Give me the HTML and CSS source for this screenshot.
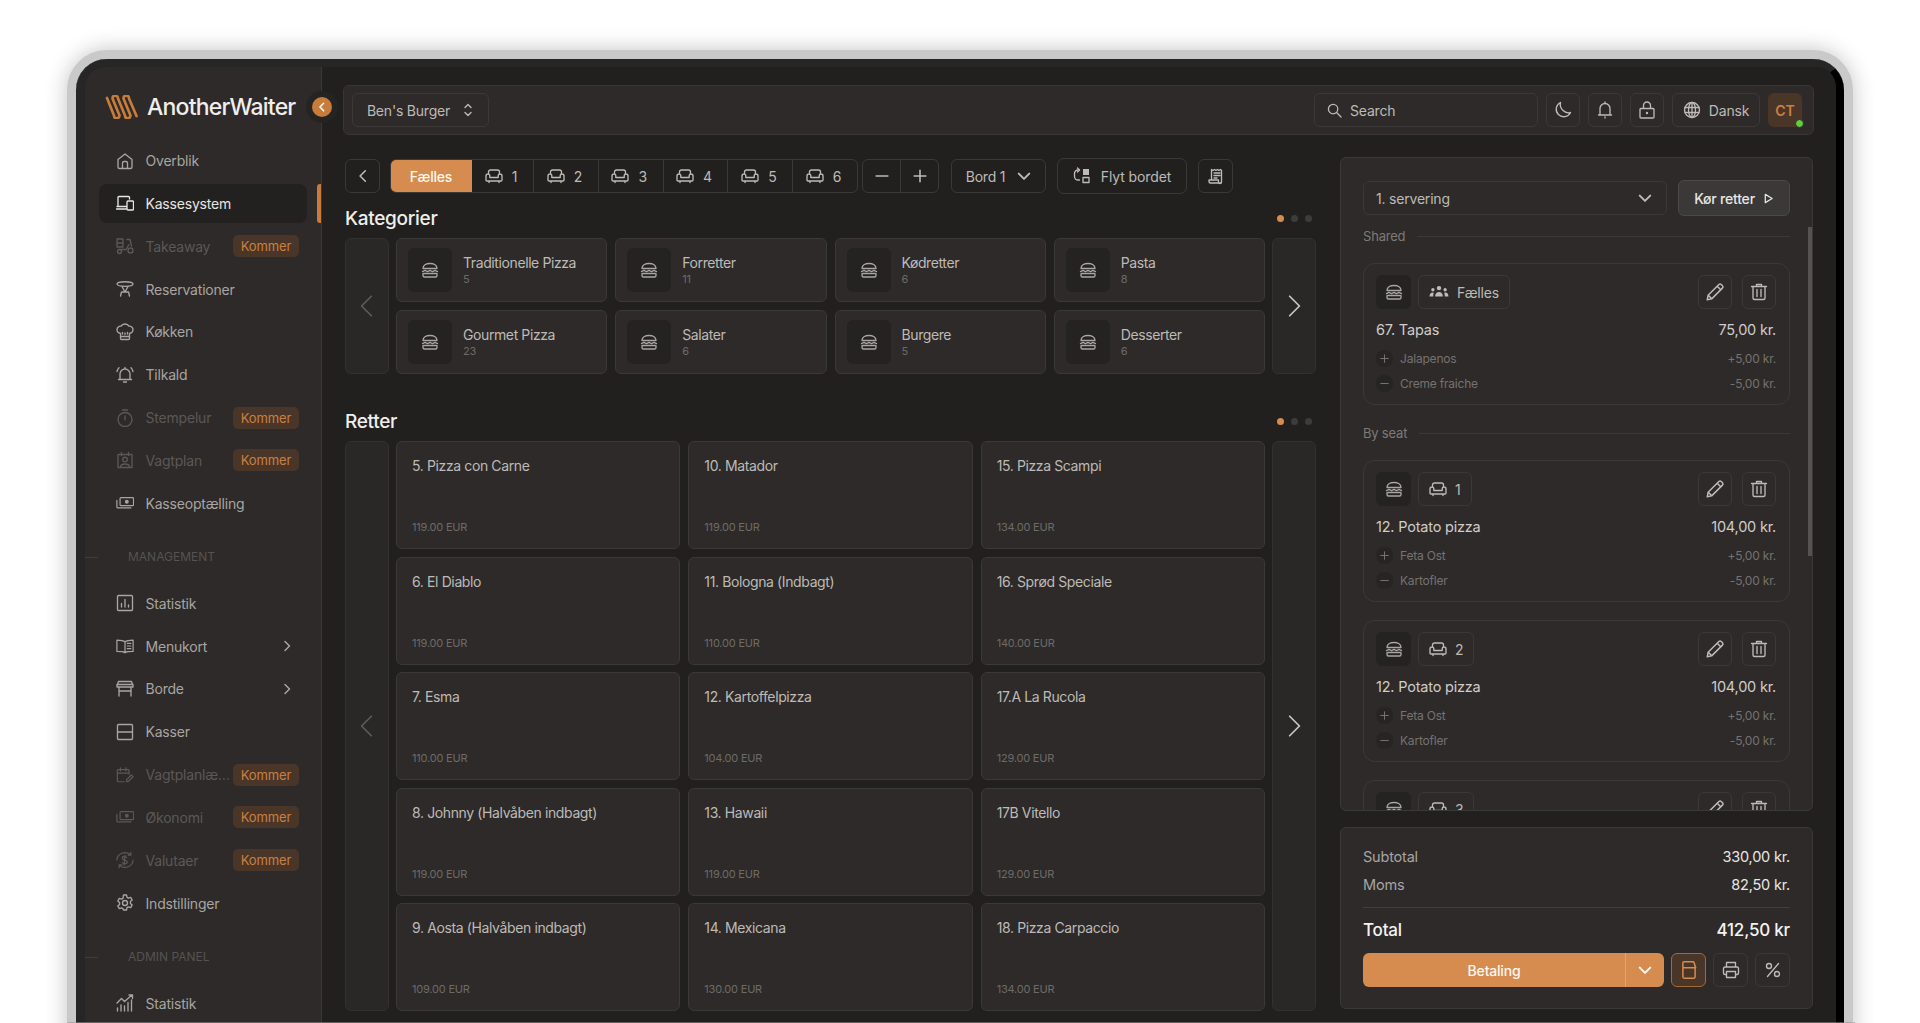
FILE: index.html
```html
<!DOCTYPE html>
<html lang="da">
<head>
<meta charset="utf-8">
<title>AnotherWaiter</title>
<link rel="stylesheet" href="styles.css">
</head>
<body>
<svg class="defs" width="0" height="0" aria-hidden="true">
<defs>
<symbol id="i-home" viewBox="0 0 18 18"><path d="M2 7.500 9 2l7 5.500V15a1.500 1.500 0 0 1-1.500 1.500h-11A1.500 1.500 0 0 1 2 15ZM6.500 16.500V11a1.500 1.500 0 0 1 1.500-1.500h2a1.500 1.500 0 0 1 1.500 1.500v5.500"/></symbol>
<symbol id="i-kasse" viewBox="0 0 18 18"><path d="M2 12V3.500A1 1 0 0 1 3 2.500h9.500a1 1 0 0 1 1 1V5M.5 15h10M1 12.500h9.500M12 7h4.500a1 1 0 0 1 1 1v7a1 1 0 0 1-1 1H12a1 1 0 0 1-1-1V8a1 1 0 0 1 1-1Z"/></symbol>
<symbol id="i-take" viewBox="0 0 18 18"><path d="M1 2h6v4H1ZM1 6h6v4H1ZM11 2.500h3l1.500 6.500M3 12.500h7l3-5"/><circle cx="3.500" cy="14.500" r="2"/><circle cx="14.500" cy="13.500" r="2.500"/></symbol>
<symbol id="i-res" viewBox="0 0 18 18"><ellipse cx="9" cy="4" rx="8" ry="2.300"/><path d="m6 6.500 3 5.500 3-5.500M9 12H5.500M9 12h3.500M4.500 16l1-4M13.500 16l-1-4"/></symbol>
<symbol id="i-chef" viewBox="0 0 18 18"><path d="M4.500 15.500V10.500C2.500 10 1 8.500 1 6.500 1 4.300 3 3 5 3.200 5.800 1.800 7.300 1 9 1s3.200.8 4 2.200C15 3 17 4.300 17 6.500c0 2-1.500 3.500-3.500 4v5a1 1 0 0 1-1 1h-7a1 1 0 0 1-1-1ZM4.500 13.500h9M9 10v1.500M6.500 9.500V11M11.500 9.500V11"/></symbol>
<symbol id="i-bell" viewBox="0 0 18 18"><path d="M4 13.500V8a5 5 0 0 1 10 0v5.500M2.500 13.500h13M9 3V1.500M7.500 16h3M1 5.500c.3-1.500 1-2.800 2-3.800M17 5.500c-.3-1.500-1-2.800-2-3.800"/></symbol>
<symbol id="i-watch" viewBox="0 0 18 18"><circle cx="9" cy="10.500" r="7"/><path d="M6.500 1h5M9 7v3.800"/></symbol>
<symbol id="i-cal" viewBox="0 0 18 18"><path d="M2.500 3.500h13a.5.5 0 0 1 .5.500v12.500H2V4a.5.5 0 0 1 .5-.5ZM5.500 1.500v3M12.500 1.500v3M4.500 16.500c0-2.500 2-3.500 4.500-3.500s4.500 1 4.500 3.500"/><circle cx="9" cy="8.500" r="2.300"/></symbol>
<symbol id="i-money" viewBox="0 0 20 18"><path d="M5.500 3h13a1 1 0 0 1 1 1v7a1 1 0 0 1-1 1h-13a1 1 0 0 1-1-1V4a1 1 0 0 1 1-1ZM1 6v7.500a1 1 0 0 0 1 1h14.500M1 6"/><circle class="solid" cx="12" cy="7.500" r="2.200"/></symbol>
<symbol id="i-stat" viewBox="0 0 18 18"><path d="M2.500 1.500h13a1 1 0 0 1 1 1v13a1 1 0 0 1-1 1h-13a1 1 0 0 1-1-1v-13a1 1 0 0 1 1-1ZM5.500 13V9.500M9 13V5.500M12.500 13v-2"/></symbol>
<symbol id="i-book" viewBox="0 0 20 18"><path d="M10 4.500C8.500 3 6 2.500 1 2.500V15c5 0 7.500.3 9 1.500 1.500-1.200 4-1.500 9-1.500V2.500c-5 0-7.500.5-9 2ZM10 4.500v12M12.500 6h4M12.500 9h4M12.500 12h4"/></symbol>
<symbol id="i-table" viewBox="0 0 18 18"><path d="M2.500 1.500h13l1 3h-15ZM1 4.500h16v2.500H1ZM3 7v9M15 7v9M3 11h12"/></symbol>
<symbol id="i-kasser" viewBox="0 0 18 18"><path d="M2.500 1.500h13a1 1 0 0 1 1 1v13a1 1 0 0 1-1 1h-13a1 1 0 0 1-1-1v-13a1 1 0 0 1 1-1ZM1.500 9h15"/></symbol>
<symbol id="i-caledit" viewBox="0 0 20 18"><path d="M9 16.500H2.500a1 1 0 0 1-1-1V4a1 1 0 0 1 1-1h11a1 1 0 0 1 1 1v4M5 1v3.500M11 1v3.500M1.500 7h13M11.500 16.500l.5-2.500 5-5 2 2-5 5Z"/></symbol>
<symbol id="i-cur" viewBox="0 0 20 18"><path d="M1 9a9 8.500 0 0 1 15-6M19 9a9 8.500 0 0 1-15 6M16.500 .5V3.500h-3M3.500 17.500V14.500h3M12 6.500C11.500 5.500 10.500 5 9.500 5 8 5 7 5.800 7 7c0 2.600 5.500 1.600 5.500 4.300 0 1.200-1 2-2.800 2-1.200 0-2.200-.6-2.700-1.600M10 3.500l-1 11"/></symbol>
<symbol id="i-gear" viewBox="0 0 18 18"><path d="M7.500 1h3l.5 2.300 1.400.8 2.300-.7 1.500 2.600-1.800 1.600v1.800l1.800 1.600-1.500 2.600-2.300-.7-1.400.8-.5 2.300h-3L7 14.700l-1.400-.8-2.300.7-1.500-2.600 1.800-1.600V8.600L1.800 7 3.300 4.400l2.300.7L7 4.300Z"/><circle cx="9" cy="9" r="2.500"/></symbol>
<symbol id="i-adm" viewBox="0 0 18 18"><path d="M1 9l4.500-4.500 3 3L16 1M13 1h3.500v3.500M1.500 17v-3M5 17v-6M8.500 17v-5M12 17V8.500M15.500 17V6"/></symbol>
<symbol id="i-burger" viewBox="0 0 18 18"><path d="M2 7.500C2 4.500 5 2.500 9 2.500s7 2 7 5ZM1.500 10.500c1.200 0 1.200-1 2.500-1s1.200 1 2.500 1 1.200-1 2.500-1 1.200 1 2.500 1 1.200-1 2.500-1 1.200 1 2.500 1M2.500 12.500h13a.5.500 0 0 1 .5.5v1.500a1.500 1.500 0 0 1-1.500 1.500h-11A1.500 1.500 0 0 1 2 14.500V13a.5.500 0 0 1 .5-.5Z"/></symbol>
<symbol id="i-sofa" viewBox="0 0 18 18"><path d="M3.500 7V5a2 2 0 0 1 2-2h7a2 2 0 0 1 2 2v2M3 7a1.800 1.800 0 0 1 1.800 1.800V10.500h8.400V8.800A1.800 1.800 0 0 1 15 7a2 2 0 0 1 2 2v4a1 1 0 0 1-1 1H2a1 1 0 0 1-1-1V9a2 2 0 0 1 2-2ZM4 14v1.500M14 14v1.500"/></symbol>
<symbol id="i-move" viewBox="0 0 18 18"><path d="M6.500 3H5a3.500 3.500 0 0 0-3.500 3.500v3A3.500 3.500 0 0 0 5 13h1.500M10 10.500h6v5h-6Z"/><path class="solid" d="M10 2h6v6h-6Z"/><path d="M6.500 3 4.500 5M6.500 3 4.500 1"/></symbol>
<symbol id="i-receipt" viewBox="0 0 18 18"><path d="M4.500 12V2.500l1.500 1 1.500-1 1.500 1 1.500-1 1.500 1 1.500-1 1 1v11.500a1.500 1.500 0 0 1-3 0V13H2v1.500A1.500 1.500 0 0 0 3.500 16h10M7 6h6M7 8.500h6M7 11h3"/></symbol>
<symbol id="i-search" viewBox="0 0 16 16"><circle cx="6.500" cy="6.500" r="5"/><path d="m10.200 10.200 4.800 4.800"/></symbol>
<symbol id="i-moon" viewBox="0 0 18 18"><path d="M6.500 1.500a7.500 7.500 0 1 0 10 10c-5 1.500-11.500-3.500-10-10Z"/></symbol>
<symbol id="i-nbell" viewBox="0 0 18 18"><path d="M4 13.500V7.500a5 5 0 0 1 10 0v6M2.500 14h13M9 2.500V1M9 16v1"/></symbol>
<symbol id="i-lock" viewBox="0 0 18 18"><path d="M3 7.500h12a1 1 0 0 1 1 1V16a1 1 0 0 1-1 1H3a1 1 0 0 1-1-1V8.500a1 1 0 0 1 1-1ZM5.500 7.500V4.500a3.500 3.500 0 0 1 7 0v3"/><circle class="solid" cx="9" cy="12" r="1.200"/></symbol>
<symbol id="i-globe" viewBox="0 0 18 18"><circle cx="9" cy="9" r="7.500"/><ellipse cx="9" cy="9" rx="3.500" ry="7.500"/><path d="M2 6.500h14M2 11.500h14M9 1.500v15"/></symbol>
<symbol id="i-group" viewBox="0 0 18 18"><circle class="solid" cx="9" cy="5.500" r="2"/><circle class="solid" cx="3.500" cy="7" r="1.500"/><circle class="solid" cx="14.500" cy="7" r="1.500"/><path class="solid" d="M5.500 13c0-2.500 1.500-4 3.500-4s3.500 1.500 3.500 4ZM.5 13c0-2 1-3.500 3-3.500l.8.200C4 10.700 3.800 11.800 3.800 13ZM17.500 13c0-2-1-3.500-3-3.500l-.8.200c.3 1 .5 2.100.5 3.300Z"/></symbol>
<symbol id="i-pen" viewBox="0 0 18 18"><path d="m2 16 .8-4L12.500 2.300a1.500 1.500 0 0 1 2.100 0l1.100 1.100a1.500 1.500 0 0 1 0 2.100L6 15.200ZM11 3.800 14.200 7M3 12l3 3"/></symbol>
<symbol id="i-trash" viewBox="0 0 18 18"><path d="M1.500 3.500h15M6.500 3.500V1.500h5v2M3 3.500V15a1.500 1.500 0 0 0 1.500 1.500h9A1.500 1.500 0 0 0 15 15V3.500M7 6.500v7M11 6.500v7"/></symbol>
<symbol id="i-box" viewBox="0 0 18 18"><path d="M4.500 1.500h8a1 1 0 0 1 1 .8L15 7H3.500V2.500a1 1 0 0 1 1-1ZM3.500 7v8a1.500 1.500 0 0 0 1.500 1.500h8a1.500 1.500 0 0 0 1.500-1.500V7"/></symbol>
<symbol id="i-print" viewBox="0 0 18 18"><path d="M4.500 6V1.500h9V6M4.500 13.500H3a1.500 1.500 0 0 1-1.500-1.500V7.500A1.500 1.500 0 0 1 3 6h12a1.500 1.500 0 0 1 1.500 1.500V12a1.500 1.500 0 0 1-1.500 1.500h-1.500M4.500 10.500h9v6h-9Z"/></symbol>
<symbol id="i-pct" viewBox="0 0 18 18"><circle cx="5" cy="5" r="2.500"/><circle cx="13" cy="13" r="2.500"/><path d="M14.500 2.500 3.500 15.500"/></symbol>
<symbol id="c-left" viewBox="0 0 12 12"><path d="M8 1.500 3.500 6 8 10.500"/></symbol>
<symbol id="c-right" viewBox="0 0 12 12"><path d="M4 1.500 8.500 6 4 10.500"/></symbol>
<symbol id="c-down" viewBox="0 0 12 12"><path d="M1.500 4 6 8.500 10.500 4"/></symbol>
<symbol id="c-ud" viewBox="0 0 12 16"><path d="M3 5.500 6 2.500l3 3M3 10.500l3 3 3-3"/></symbol>
<symbol id="c-play" viewBox="0 0 12 12"><path d="M2.500 1.500 10 6l-7.500 4.500Z"/></symbol>
<symbol id="i-plus" viewBox="0 0 12 12"><path d="M6 1v10M1 6h10"/></symbol>
<symbol id="i-minus" viewBox="0 0 12 12"><path d="M1 6h10"/></symbol>
</defs>
</svg>

<div class="device">
<div class="bezel">
<div class="screen">

<aside class="sidebar">
  <div class="brand">
    <svg class="logo" viewBox="0 0 34 24"><path d="M2 3 9 20.500A2.750 2.750 0 0 0 14.500 20.500L7.500 3.500A2.750 2.750 0 0 1 13 3.500L20 20.500A2.750 2.750 0 0 0 25.500 20.500L18.500 3.500A2.750 2.750 0 0 1 24 3.500L31.500 21"/></svg>
    <span class="brand-name">AnotherWaiter</span>
  </div>
  <button class="collapse"><svg class="ic"><use href="#c-left"/></svg></button>
  <nav class="nav">
    <a class="item"><svg class="ic"><use href="#i-home"/></svg><span>Overblik</span></a>
    <a class="item active"><svg class="ic"><use href="#i-kasse"/></svg><span>Kassesystem</span></a>
    <a class="item off"><svg class="ic"><use href="#i-take"/></svg><span>Takeaway</span><em>Kommer</em></a>
    <a class="item"><svg class="ic"><use href="#i-res"/></svg><span>Reservationer</span></a>
    <a class="item"><svg class="ic"><use href="#i-chef"/></svg><span>Køkken</span></a>
    <a class="item"><svg class="ic"><use href="#i-bell"/></svg><span>Tilkald</span></a>
    <a class="item off"><svg class="ic"><use href="#i-watch"/></svg><span>Stempelur</span><em>Kommer</em></a>
    <a class="item off"><svg class="ic"><use href="#i-cal"/></svg><span>Vagtplan</span><em>Kommer</em></a>
    <a class="item"><svg class="ic"><use href="#i-money"/></svg><span>Kasseoptælling</span></a>
    <div class="group">MANAGEMENT</div>
    <a class="item"><svg class="ic"><use href="#i-stat"/></svg><span>Statistik</span></a>
    <a class="item"><svg class="ic"><use href="#i-book"/></svg><span>Menukort</span><svg class="arrow"><use href="#c-right"/></svg></a>
    <a class="item"><svg class="ic"><use href="#i-table"/></svg><span>Borde</span><svg class="arrow"><use href="#c-right"/></svg></a>
    <a class="item"><svg class="ic"><use href="#i-kasser"/></svg><span>Kasser</span></a>
    <a class="item off"><svg class="ic"><use href="#i-caledit"/></svg><span class="trunc">Vagtplanlægning</span><em>Kommer</em></a>
    <a class="item off"><svg class="ic"><use href="#i-money"/></svg><span>Økonomi</span><em>Kommer</em></a>
    <a class="item off"><svg class="ic"><use href="#i-cur"/></svg><span>Valutaer</span><em>Kommer</em></a>
    <a class="item"><svg class="ic"><use href="#i-gear"/></svg><span>Indstillinger</span></a>
    <div class="group">ADMIN PANEL</div>
    <a class="item"><svg class="ic"><use href="#i-adm"/></svg><span>Statistik</span></a>
  </nav>
</aside>

<main class="main">
  <header class="topbar">
    <button class="btn venue">Ben's Burger<svg class="ic ud"><use href="#c-ud"/></svg></button>
    <div class="spacer"></div>
    <div class="btn search"><svg class="ic s16"><use href="#i-search"/></svg>Search</div>
    <button class="btn sq"><svg class="ic"><use href="#i-moon"/></svg></button>
    <button class="btn sq"><svg class="ic"><use href="#i-nbell"/></svg></button>
    <button class="btn sq"><svg class="ic"><use href="#i-lock"/></svg></button>
    <button class="btn lang"><svg class="ic"><use href="#i-globe"/></svg>Dansk</button>
    <div class="avatar">CT<i class="online"></i></div>
  </header>

  <div class="content">
    <section class="left">
      <div class="toolbar">
        <button class="btn back"><svg class="ic c12"><use href="#c-left"/></svg></button>
        <div class="seats">
          <button class="seat all">Fælles</button>
          <button class="seat s1"><svg class="ic"><use href="#i-sofa"/></svg>1</button>
          <button class="seat"><svg class="ic"><use href="#i-sofa"/></svg>2</button>
          <button class="seat"><svg class="ic"><use href="#i-sofa"/></svg>3</button>
          <button class="seat"><svg class="ic"><use href="#i-sofa"/></svg>4</button>
          <button class="seat"><svg class="ic"><use href="#i-sofa"/></svg>5</button>
          <button class="seat"><svg class="ic"><use href="#i-sofa"/></svg>6</button>
        </div>
        <div class="stepper">
          <button><svg class="ic c12"><use href="#i-minus"/></svg></button>
          <button><svg class="ic c12"><use href="#i-plus"/></svg></button>
        </div>
        <button class="btn bord">Bord 1<svg class="ic c12 thick"><use href="#c-down"/></svg></button>
        <button class="btn flyt"><svg class="ic"><use href="#i-move"/></svg>Flyt bordet</button>
        <button class="btn rcpt"><svg class="ic"><use href="#i-receipt"/></svg></button>
      </div>

      <div class="sec-head muted-h"><h2>Kategorier</h2><div class="dots"><i class="on"></i><i></i><i></i></div></div>
      <div class="slider cat-slider">
        <button class="nav-col"><svg class="ic big dim"><use href="#c-left"/></svg></button>
        <div class="cat-grid">
          <div class="cat"><span class="cat-ic"><svg class="ic"><use href="#i-burger"/></svg></span><div><b>Traditionelle Pizza</b><small>5</small></div></div>
          <div class="cat"><span class="cat-ic"><svg class="ic"><use href="#i-burger"/></svg></span><div><b>Forretter</b><small>11</small></div></div>
          <div class="cat"><span class="cat-ic"><svg class="ic"><use href="#i-burger"/></svg></span><div><b>Kødretter</b><small>6</small></div></div>
          <div class="cat"><span class="cat-ic"><svg class="ic"><use href="#i-burger"/></svg></span><div><b>Pasta</b><small>8</small></div></div>
          <div class="cat"><span class="cat-ic"><svg class="ic"><use href="#i-burger"/></svg></span><div><b>Gourmet Pizza</b><small>23</small></div></div>
          <div class="cat"><span class="cat-ic"><svg class="ic"><use href="#i-burger"/></svg></span><div><b>Salater</b><small>6</small></div></div>
          <div class="cat"><span class="cat-ic"><svg class="ic"><use href="#i-burger"/></svg></span><div><b>Burgere</b><small>5</small></div></div>
          <div class="cat"><span class="cat-ic"><svg class="ic"><use href="#i-burger"/></svg></span><div><b>Desserter</b><small>6</small></div></div>
        </div>
        <button class="nav-col"><svg class="ic big"><use href="#c-right"/></svg></button>
      </div>

      <div class="sec-head retter-h"><h2>Retter</h2><div class="dots"><i class="on"></i><i></i><i></i></div></div>
      <div class="slider">
        <button class="nav-col"><svg class="ic big dim"><use href="#c-left"/></svg></button>
        <div class="dish-grid">
          <div class="dish"><b>5. Pizza con Carne</b><small>119.00 EUR</small></div>
          <div class="dish"><b>10. Matador</b><small>119.00 EUR</small></div>
          <div class="dish"><b>15. Pizza Scampi</b><small>134.00 EUR</small></div>
          <div class="dish"><b>6. El Diablo</b><small>119.00 EUR</small></div>
          <div class="dish"><b>11. Bologna (Indbagt)</b><small>110.00 EUR</small></div>
          <div class="dish"><b>16. Sprød Speciale</b><small>140.00 EUR</small></div>
          <div class="dish"><b>7. Esma</b><small>110.00 EUR</small></div>
          <div class="dish"><b>12. Kartoffelpizza</b><small>104.00 EUR</small></div>
          <div class="dish"><b>17.A La Rucola</b><small>129.00 EUR</small></div>
          <div class="dish"><b>8. Johnny (Halvåben indbagt)</b><small>119.00 EUR</small></div>
          <div class="dish"><b>13. Hawaii</b><small>119.00 EUR</small></div>
          <div class="dish"><b>17B Vitello</b><small>129.00 EUR</small></div>
          <div class="dish"><b>9. Aosta (Halvåben indbagt)</b><small>109.00 EUR</small></div>
          <div class="dish"><b>14. Mexicana</b><small>130.00 EUR</small></div>
          <div class="dish"><b>18. Pizza Carpaccio</b><small>134.00 EUR</small></div>
        </div>
        <button class="nav-col"><svg class="ic big"><use href="#c-right"/></svg></button>
      </div>
    </section>

    <section class="right">
      <div class="panel">
        <div class="scrollthumb"></div>
        <div class="course-row">
          <button class="btn course">1. servering<svg class="ic c12 thick"><use href="#c-down"/></svg></button>
          <button class="btn run">Kør retter<svg class="ic c12"><use href="#c-play"/></svg></button>
        </div>
        <div class="divider first"><span>Shared</span></div>
        <article class="order">
          <div class="o-top"><span class="o-ic"><svg class="ic"><use href="#i-burger"/></svg></span><span class="chip"><svg class="ic grp"><use href="#i-group"/></svg>Fælles</span><span class="spacer"></span><button class="btn sq"><svg class="ic pen"><use href="#i-pen"/></svg></button><button class="btn sq"><svg class="ic"><use href="#i-trash"/></svg></button></div>
          <div class="o-name"><span>67. Tapas</span><span>75,00 kr.</span></div>
          <div class="o-add"><i><svg class="ic"><use href="#i-plus"/></svg></i><span>Jalapenos</span><span>+5,00 kr.</span></div>
          <div class="o-add"><i><svg class="ic"><use href="#i-minus"/></svg></i><span>Creme fraiche</span><span>-5,00 kr.</span></div>
        </article>
        <div class="divider"><span>By seat</span></div>
        <article class="order">
          <div class="o-top"><span class="o-ic"><svg class="ic"><use href="#i-burger"/></svg></span><span class="chip"><svg class="ic"><use href="#i-sofa"/></svg>1</span><span class="spacer"></span><button class="btn sq"><svg class="ic pen"><use href="#i-pen"/></svg></button><button class="btn sq"><svg class="ic"><use href="#i-trash"/></svg></button></div>
          <div class="o-name"><span>12. Potato pizza</span><span>104,00 kr.</span></div>
          <div class="o-add"><i><svg class="ic"><use href="#i-plus"/></svg></i><span>Feta Ost</span><span>+5,00 kr.</span></div>
          <div class="o-add"><i><svg class="ic"><use href="#i-minus"/></svg></i><span>Kartofler</span><span>-5,00 kr.</span></div>
        </article>
        <article class="order">
          <div class="o-top"><span class="o-ic"><svg class="ic"><use href="#i-burger"/></svg></span><span class="chip"><svg class="ic"><use href="#i-sofa"/></svg>2</span><span class="spacer"></span><button class="btn sq"><svg class="ic pen"><use href="#i-pen"/></svg></button><button class="btn sq"><svg class="ic"><use href="#i-trash"/></svg></button></div>
          <div class="o-name"><span>12. Potato pizza</span><span>104,00 kr.</span></div>
          <div class="o-add"><i><svg class="ic"><use href="#i-plus"/></svg></i><span>Feta Ost</span><span>+5,00 kr.</span></div>
          <div class="o-add"><i><svg class="ic"><use href="#i-minus"/></svg></i><span>Kartofler</span><span>-5,00 kr.</span></div>
        </article>
        <article class="order">
          <div class="o-top"><span class="o-ic"><svg class="ic"><use href="#i-burger"/></svg></span><span class="chip"><svg class="ic"><use href="#i-sofa"/></svg>3</span><span class="spacer"></span><button class="btn sq"><svg class="ic pen"><use href="#i-pen"/></svg></button><button class="btn sq"><svg class="ic"><use href="#i-trash"/></svg></button></div>
        </article>
      </div>
      <div class="summary">
        <div class="sum-row"><span>Subtotal</span><b>330,00 kr.</b></div>
        <div class="sum-row"><span>Moms</span><b>82,50 kr.</b></div>
        <div class="sum-total"><span>Total</span><span>412,50 kr</span></div>
        <div class="pay-row">
          <div class="pay"><button>Betaling</button><button class="pay-more"><svg class="ic c12 thick"><use href="#c-down"/></svg></button></div>
          <button class="btn sq act"><svg class="ic pen"><use href="#i-box"/></svg></button>
          <button class="btn sq"><svg class="ic"><use href="#i-print"/></svg></button>
          <button class="btn sq"><svg class="ic"><use href="#i-pct"/></svg></button>
        </div>
      </div>
    </section>
  </div>
</main>

</div>
</div>
</div>
</body>
</html>
```

FILE: styles.css
```css
* { box-sizing: border-box; }
html, body { margin: 0; height: 100%; }
body {
  height: 1023px;
  overflow: hidden;
  padding: 50px 67px 0 67px;
  background: #fff;
  font-family: Inter, "Noto Sans", sans-serif;
  color: #cfccc9;
  letter-spacing: -0.2px;
}
body::after { content: ""; position: fixed; left: 67px; right: 65px; bottom: 0; height: 1px; background: rgba(150,150,150,.55); }
button { font: inherit; color: inherit; letter-spacing: inherit; background: none; border: 0; padding: 0; }
.defs { position: absolute; }
.spacer { flex: 1; }

.ic { width: 18px; height: 18px; flex: none; fill: none; stroke: currentColor; stroke-width: 1.350; stroke-linecap: round; stroke-linejoin: round; }
.ic .solid, symbol .solid { fill: currentColor; stroke: none; }
.c12 { width: 14px; height: 14px; }
.s16 { width: 15px; height: 15px; }
.pen { width: 20px; height: 20px; }
.grp { width: 20px; height: 20px; }
.thick { stroke-width: 1.700; }
.big { width: 26px; height: 26px; stroke-width: .8; color: #c9c6c3; }
.big.dim { color: #5d5a58; }

.device {
  height: 1100px;
  border: 9px solid #c9c9c9;
  border-radius: 40px;
  box-shadow: 0 0 22px rgba(0,0,0,.24), inset 0 0 0 2px #e4e4e4;
  background: #000;
}
.bezel {
  height: 100%;
  border: solid #262626;
  border-width: 8px 8px 9px 9px;
  border-right-color: #000;
  border-radius: 31px;
}
.screen {
  display: flex;
  height: 100%;
  border-radius: 20px 20px 0 0;
  overflow: hidden;
  background: #21201f;
}

/* sidebar */
.sidebar {
  position: relative;
  width: 237px;
  flex: none;
  background: #2d2a29;
  border-right: 1px solid #3a3836;
}
.brand { display: flex; align-items: center; gap: 8px; height: 40px; margin: 20px 0 0 20px; }
.logo { width: 34px; height: 24px; fill: none; stroke: #c77c3b; stroke-width: 2.700; stroke-linecap: round; stroke-linejoin: round; }
.brand-name { font-size: 23px; font-weight: 500; color: #f0eeec; letter-spacing: -.8px; }
.collapse {
  position: absolute; top: 30px; right: -11px; z-index: 2;
  width: 20px; height: 20px; border-radius: 50%;
  display: grid; place-items: center;
  background: #c77c3b; color: #fff;
  box-shadow: 0 0 0 6px #262423;
}
.collapse .ic { width: 10px; height: 10px; stroke-width: 1.800; }
.nav { margin-top: 14px; }
.item {
  display: flex; align-items: center;
  height: 39px; margin: 0 14px 3.850px 14px; padding: 0 8px 0 17px;
  border-radius: 8px; font-size: 14px; color: #a8a5a2; position: relative;
  white-space: nowrap;
}
.item > .ic { margin: 0 11.500px 0 0; }
.item span { flex: 1; min-width: 0; }
.item .trunc { overflow: hidden; text-overflow: ellipsis; }
.item.off { color: #5b5856; }
.item em { flex: none; width: 66px; height: 22px; line-height: 22px; text-align: center; border-radius: 5px; background: #4a3629; color: #c9803f; font-size: 13px; font-style: normal; letter-spacing: -.1px; }
.item.active { background: #232120; color: #e8e6e4; }
.item.active::after { content: ""; position: absolute; right: -14px; top: 0; bottom: 0; width: 4px; background: #c77c3b; border-radius: 3px 0 0 3px; }
.arrow { width: 12px; height: 12px; fill: none; stroke: currentColor; stroke-width: 1.500; stroke-linecap: round; stroke-linejoin: round; margin-right: 6px; }
.group { position: relative; height: 20px; margin: 24px 0 17px; padding-left: 43px; font-size: 12px; line-height: 20px; color: #565351; letter-spacing: 0; }
.group::before { content: ""; position: absolute; left: 0; top: 10px; width: 13px; height: 1px; background: #403e3c; }

/* main */
.main { flex: 1; min-width: 0; padding: 18px 22px 0 21px; }
.btn {
  display: flex; align-items: center; justify-content: center;
  height: 34px; border: 1px solid #3b3937; border-radius: 6px;
  font-size: 14px; color: #bdbab7; flex: none;
}
.sq { width: 34px; }
.topbar {
  display: flex; align-items: center; gap: 8px;
  height: 50px; padding: 0 11px 0 8px;
  background: #2d2a29; border: 1px solid #393735; border-radius: 6px;
}
.venue { width: 137px; gap: 12px; }
.ud { width: 12px; height: 16px; }
.search { width: 224px; justify-content: flex-start; gap: 8px; padding-left: 12px; }
.lang { width: 88px; gap: 8px; }
.avatar { position: relative; width: 34px; height: 34px; border-radius: 6px; background: #4a3629; color: #c9803f; font-size: 14px; font-weight: 600; display: grid; place-items: center; letter-spacing: 0; }
.online { position: absolute; right: -2px; bottom: -1px; width: 9px; height: 9px; border-radius: 50%; background: #5fcf3a; border: 1px solid #2d2a29; }

.content { display: flex; gap: 24px; margin-top: 22px; }
.left { width: 971px; flex: none; margin-left: 2px; padding-top: 2px; }
.right { width: 473px; flex: none; display: flex; flex-direction: column; gap: 16px; }

.toolbar { display: flex; align-items: center; height: 34px; }
.back { width: 35px; margin-right: 10px; }
.seats { display: flex; width: 468px; height: 34px; margin-right: 4px; border: 1px solid #3b3937; border-radius: 6px; overflow: hidden; }
.seat { flex: 1; display: flex; align-items: center; justify-content: center; gap: 9px; padding-right: 3px; border-left: 1px solid #3b3937; font-size: 14px; color: #bdbab7; }
.seat.all { flex: none; width: 82px; padding-right: 0; margin: -1px 0 -1px -1px; border-left: 0; background: #d68c4e; color: #fdf8f3; font-weight: 500; }
.seat.s1 { flex: none; width: 61px; border-left: 0; }
.stepper { display: flex; width: 77px; height: 34px; margin-right: 12px; border: 1px solid #3b3937; border-radius: 6px; }
.stepper button { flex: 1; display: grid; place-items: center; color: #bdbab7; }
.stepper button + button { border-left: 1px solid #3b3937; }
.bord { width: 95px; gap: 12px; margin-right: 11px; }
.flyt { width: 130px; height: 36px; gap: 10px; margin-right: 11px; border-radius: 7px; letter-spacing: -.1px; }
.rcpt { width: 35px; }

.sec-head { display: flex; align-items: center; justify-content: space-between; height: 24px; padding-right: 4px; margin-bottom: 8px; }
.muted-h { margin-top: 13px; }
.muted-h h2 { color: #cfccc9; }
.retter-h { margin-top: 35px; }
.sec-head h2 { margin: 0; font-size: 19px; font-weight: 500; color: #f0eeec; letter-spacing: -.3px; }
.dots { display: flex; gap: 7px; }
.dots i { width: 7px; height: 7px; border-radius: 50%; background: #3e3c3a; }
.dots i.on { background: #d68c4e; }

.slider { display: flex; gap: 7px; }
.nav-col { width: 44px; flex: none; display: grid; place-items: center; border: 1px solid #333130; border-radius: 6px; background: #2a2827; }
.cat-grid { flex: 1; display: grid; grid-template-columns: repeat(4, 1fr); grid-auto-rows: 64px; gap: 8px; }
.cat { display: flex; align-items: center; gap: 11px; padding-left: 11px; background: #2d2a29; border: 1px solid #3b3937; border-radius: 6px; }
.cat-ic { width: 44px; height: 44px; display: grid; place-items: center; border-radius: 6px; background: #242322; color: #a8a5a2; }
.cat b { display: block; font-size: 14px; font-weight: 400; line-height: 18px; color: #bdbab7; letter-spacing: -.4px; }
.cat small { display: block; font-size: 11px; line-height: 14px; color: #6d6a68; }
.dish-grid { flex: 1; display: grid; grid-template-columns: repeat(3, 1fr); grid-auto-rows: 108px; gap: 7.500px 8px; }
.dish { display: flex; flex-direction: column; justify-content: space-between; padding: 14px 15px 14px; background: #2d2a29; border: 1px solid #3b3937; border-radius: 6px; }
.dish b { font-size: 14px; font-weight: 400; line-height: 20px; color: #bdbab7; letter-spacing: -.38px; }
.dish small { font-size: 11px; line-height: 14px; color: #6d6a68; }

/* order panel */
.panel { position: relative; height: 654px; overflow: hidden; padding: 22px 22px 0; background: #2d2a29; border: 1px solid #3b3937; border-radius: 6px; }
.scrollthumb { position: absolute; right: 0; top: 69px; width: 4px; height: 329px; background: #555250; }
.course-row { display: flex; align-items: center; gap: 11px; height: 36px; }
.course { flex: 1; justify-content: space-between; padding: 0 14px 0 12px; }
.run { width: 112px; height: 36px; gap: 8px; background: #3b3937; border-color: #4c4a48; color: #e8e6e4; font-weight: 500; }
.run .ic { width: 11px; height: 11px; }
.divider { display: flex; align-items: center; gap: 12px; height: 20px; margin: 18px 0 17px; font-size: 13px; color: #7d7a78; }
.divider.first { margin: 10px 0 17px; }
.divider::after { content: ""; flex: 1; height: 1px; background: #3b3937; }
.order { height: 142px; margin-bottom: 18px; padding: 11px 13px 0 12px; border: 1px solid #3b3937; border-radius: 12px; }
.o-top { display: flex; align-items: center; gap: 7px; height: 34px; }
.o-top .sq:last-child { margin-left: 3px; }
.o-ic { width: 35px; height: 34px; display: grid; place-items: center; border-radius: 6px; background: #242322; color: #a8a5a2; }
.chip { display: flex; align-items: center; gap: 8px; height: 34px; padding: 0 10px; border: 1px solid #3b3937; border-radius: 6px; font-size: 14px; color: #bdbab7; }
.o-name { display: flex; justify-content: space-between; align-items: center; height: 20px; margin: 10px 0 9.500px; font-size: 14.500px; color: #cfccc9; }
.o-add { display: flex; align-items: center; gap: 7px; height: 20px; margin-bottom: 5px; font-size: 12px; color: #757270; }
.o-add i { width: 17px; height: 17px; display: grid; place-items: center; border-radius: 8px; background: #262524; color: #757270; }
.o-add i .ic { width: 9px; height: 9px; }
.o-add span:first-of-type { flex: 1; }

/* summary */
.summary { height: 182px; padding: 18px 22px 0; background: #2d2a29; border: 1px solid #3b3937; border-radius: 6px; }
.sum-row { display: flex; justify-content: space-between; align-items: center; height: 20px; margin-bottom: 8px; font-size: 14.500px; color: #a8a5a2; }
.sum-row b { font-weight: 400; color: #e8e6e4; }
.sum-total { display: flex; justify-content: space-between; align-items: center; height: 24px; font-size: 17px; font-weight: 500; color: #f4f2f0; position: relative; margin-bottom: 11px; }
.sum-total::before { content: ""; position: absolute; left: 0; right: 0; top: -11px; height: 1px; background: #413f3d; }
.sum-row + .sum-total { margin-top: 24px; }
.pay-row { display: flex; align-items: center; gap: 7px; }
.pay-row .sq { width: 35px; }
.pay { display: flex; width: 301px; height: 34px; border-radius: 6px; background: #d68c4e; color: #fdf8f3; font-size: 14px; font-weight: 500; overflow: hidden; }
.pay button:first-child { flex: 1; }
.pay-more { width: 39px; display: grid; place-items: center; border-left: 1px solid #e2a474; }
.act { background: #4a3629; border-color: #a36a38; color: #d68c4e; }
```
